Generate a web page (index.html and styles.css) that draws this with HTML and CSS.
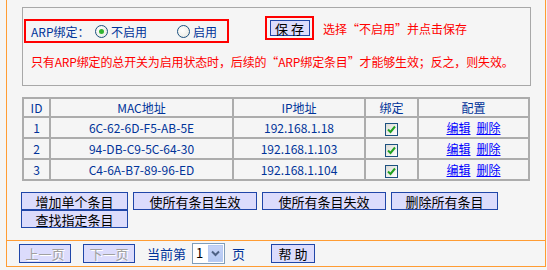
FILE: index.html
```html
<!DOCTYPE html>
<html>
<head>
<meta charset="utf-8">
<link rel="stylesheet" href="styles.css">
</head>
<body>
<div class="frame">
  <div class="main">
    <div class="panel">
      <div class="toprow">
        <div class="arpbox">
          <span class="lbl">ARP绑定：</span>
          <span class="opt"><span class="radio on"></span>不启用</span>
          <span class="opt opt2"><span class="radio"></span>启用</span>
        </div>
        <div class="savebox"><span class="btn savebtn">保 存</span></div>
        <span class="hint">选择“不启用”并点击保存</span>
      </div>
      <p class="warn">只有ARP绑定的总开关为启用状态时，后续的“ARP绑定条目”才能够生效；反之，则失效。</p>
    </div>
    <table class="list">
      <tr class="head"><td class="c1">ID</td><td class="c2">MAC地址</td><td class="c3">IP地址</td><td class="c4">绑定</td><td class="c5">配置</td></tr>
      <tr><td>1</td><td>6C-62-6D-F5-AB-5E</td><td>192.168.1.18</td><td><span class="chk"><svg width="9" height="9" viewBox="0 0 9 9"><path d="M1 4.5 L3.5 7 L8 1.5" fill="none" stroke="#21a121" stroke-width="2"/></svg></span></td><td><a href="#">编辑</a><a href="#" class="del">删除</a></td></tr>
      <tr><td>2</td><td>94-DB-C9-5C-64-30</td><td>192.168.1.103</td><td><span class="chk"><svg width="9" height="9" viewBox="0 0 9 9"><path d="M1 4.5 L3.5 7 L8 1.5" fill="none" stroke="#21a121" stroke-width="2"/></svg></span></td><td><a href="#">编辑</a><a href="#" class="del">删除</a></td></tr>
      <tr><td>3</td><td>C4-6A-B7-89-96-ED</td><td>192.168.1.104</td><td><span class="chk"><svg width="9" height="9" viewBox="0 0 9 9"><path d="M1 4.5 L3.5 7 L8 1.5" fill="none" stroke="#21a121" stroke-width="2"/></svg></span></td><td><a href="#">编辑</a><a href="#" class="del">删除</a></td></tr>
    </table>
    <div class="actions">
      <div class="arow">
        <span class="btn b1">增加单个条目</span>
        <span class="btn b2">使所有条目生效</span>
        <span class="btn b2">使所有条目失效</span>
        <span class="btn b1">删除所有条目</span>
      </div>
      <div class="arow">
        <span class="btn b1">查找指定条目</span>
      </div>
    </div>
  </div>
  <div class="footer">
    <span class="btn fbtn dis">上一页</span>
    <span class="btn fbtn dis">下一页</span>
    <span class="cur">当前第</span>
    <span class="sel"><span class="selv">1</span><span class="selb"><svg width="9" height="7" viewBox="0 0 9 7"><path d="M1 1.5 L4.5 5 L8 1.5" fill="none" stroke="#4d6185" stroke-width="2"/></svg></span></span>
    <span class="cur page">页</span>
    <span class="btn help">帮 助</span>
  </div>
</div>
</body>
</html>
```
FILE: styles.css
```css
html, body {
  margin: 0;
  padding: 0;
  background: #f5f5f5;
}
body {
  font-family: "Noto Sans CJK SC", "Liberation Sans", sans-serif;
  font-size: 12px;
  color: #003399;
}
.frame {
  margin-left: 6px;
  width: 538px;
  border-left: 1px solid #ff9c33;
  border-right: 1px solid #ff9c33;
  border-bottom: 1px solid #ff9c33;
}
.main {
  border-bottom: 1px solid #ff9c33;
  padding: 7px 0 0 15px;
  height: 233px;
  box-sizing: content-box;
}
.panel {
  width: 507px;
  height: 77px;
  border: 1px solid #a8a8a8;
  position: relative;
}
.toprow {
  display: flex;
  align-items: center;
  height: 34px;
  margin-top: 6px;
}
.arpbox {
  margin-left: 1px;
  width: 196px;
  height: 20px;
  border: 2px solid #ff0000;
  display: flex;
  align-items: center;
  padding-left: 5px;
  box-sizing: content-box;
}
.lbl { width: 64px; }
.opt {
  display: flex;
  align-items: center;
  gap: 3px;
}
.opt2 { margin-left: 30px; }
.radio {
  width: 11px;
  height: 11px;
  border-radius: 50%;
  border: 1px solid #1c5180;
  background: radial-gradient(circle at 40% 40%, #ffffff 0, #e6e6dd 100%);
  position: relative;
  box-sizing: content-box;
}
.radio.on::after {
  content: "";
  position: absolute;
  left: 3px;
  top: 3px;
  width: 5px;
  height: 5px;
  border-radius: 50%;
  background: #31b431;
}
.savebox {
  margin-left: 36px;
  width: 45px;
  height: 20px;
  border: 2px solid #ff0000;
  display: flex;
  align-items: center;
  justify-content: center;
  margin-top: -6px;
}
.btn {
  display: inline-flex;
  align-items: center;
  justify-content: center;
  background: #dcdcfc;
  border: 1px solid #2046a8;
  color: #000;
  box-sizing: border-box;
  font-size: 13px;
  line-height: 1;
}
.savebtn {
  width: 40px;
  height: 16px;
}
.hint {
  color: #ff0000;
  margin-left: 9px;
  font-size: 12px;
  margin-top: -6px;
}
.warn {
  margin: 5px 0 0 8px;
  color: #ff0000;
  font-size: 12px;
  letter-spacing: -0.15px;
}
.list {
  margin-top: 11px;
  border-collapse: separate;
  border-spacing: 0;
  border: 1px solid #acacac;
  width: 508px;
  table-layout: fixed;
}
.list td {
  border: 1px solid #acacac;
  text-align: center;
  height: 19px;
  padding: 0;
  font-size: 12px;
}
.list .head td { height: 17px; }
.c1 { width: 25px; }
.c2 { width: 181px; }
.c3 { width: 130px; }
.c4 { width: 51px; }
.list a {
  color: #0000ff;
  text-decoration: underline;
}
.list a.del { margin-left: 6px; }
.chk {
  display: inline-flex;
  align-items: center;
  justify-content: center;
  width: 11px;
  height: 11px;
  border: 1px solid #1c5180;
  background: linear-gradient(135deg, #dcdcd6, #ffffff);
  vertical-align: middle;
}
.actions {
  margin-top: 11px;
  margin-left: -1px;
}
.arow {
  display: flex;
  gap: 6px;
}
.b1 { width: 107px; height: 18px; }
.b2 { width: 125px; height: 18px; }
.arow .b1, .arow .b2 { margin-right: -1px; }
.b2 { width: 124px; }
.footer {
  height: 25px;
  display: flex;
  align-items: center;
  padding-left: 12px;
}
.fbtn {
  width: 52px;
  height: 19px;
  margin-right: 12px;
}
.dis {
  color: #a0a0a0;
  text-shadow: 1px 1px 0 #ffffff;
}
.cur {
  font-size: 13px;
  color: #003399;
}
.sel {
  display: inline-flex;
  margin-left: 6px;
  width: 33px;
  height: 21px;
  border: 1px solid #7f9db9;
  background: #fff;
  box-sizing: border-box;
}
.selv {
  flex: 1;
  color: #000;
  padding-left: 3px;
  font-size: 13px;
  line-height: 17px;
}
.selb {
  width: 15px;
  margin: 1px;
  background: linear-gradient(#c6d3f7, #b4c8f2);
  border: 1px solid #b9cbf3;
  box-sizing: border-box;
  display: flex;
  align-items: center;
  justify-content: center;
}
.page { margin-left: 7px; }
.help {
  margin-left: 26px;
  width: 44px;
  height: 19px;
}
```
